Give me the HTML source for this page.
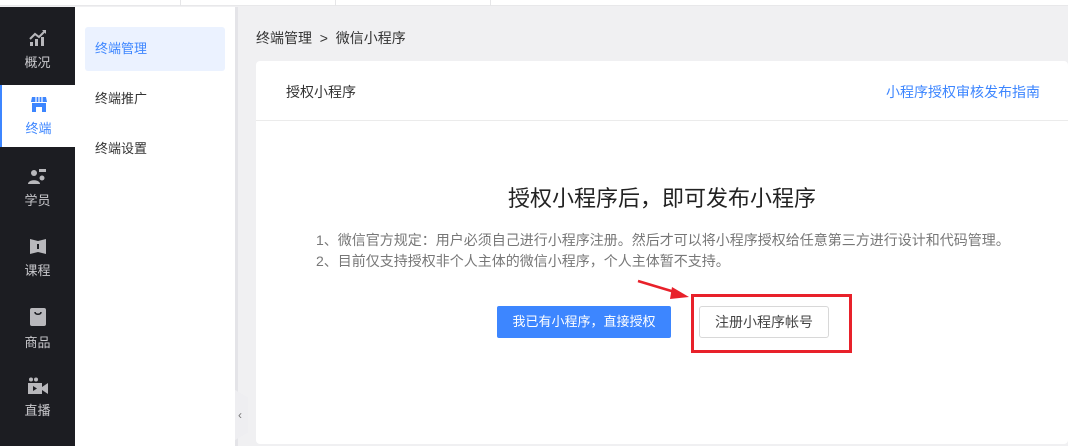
<!DOCTYPE html>
<html><head><meta charset="utf-8"><style>
*{margin:0;padding:0;box-sizing:border-box}
body{width:1068px;height:446px;overflow:hidden;background:#f0f0f2;font-family:"Liberation Sans","Noto Sans CJK SC",sans-serif;position:relative}
.top{position:absolute;left:0;top:0;width:1068px;height:6px;background:#fff;border-bottom:1px solid #e8e8ea}
.top i{position:absolute;top:0;height:6px;width:1px;background:#e6e6e8}
.side{position:absolute;left:0;top:7px;width:75px;height:439px;background:#1c1d22}
.item{position:absolute;left:0;width:75px;height:62px;text-align:center;color:#c8c8cc;font-size:13px;padding-top:5px}
.item svg{display:block;margin:0 auto 5px}
.active{background:#fff;color:#3d86ff;border-left:2px solid #3d86ff}
.sub{position:absolute;left:75px;top:7px;width:160px;height:439px;background:#fff}
.sub div{position:absolute;left:10px;width:140px;height:44px;line-height:44px;padding-left:10px;font-size:13px;color:#333}
.sub .on{background:#ebf2ff;color:#3d86ff;border-radius:3px}
.bar{position:absolute;left:235px;top:7px;width:3px;height:439px;background:#e4e4e8}
.handle{position:absolute;left:235px;top:390px;width:13px;height:50px;background:#eeeef1;clip-path:polygon(0 0,100% 15%,100% 85%,0 100%);color:#777;font-size:12px;line-height:50px;padding-left:3px}
.crumb{position:absolute;left:256px;top:28px;font-size:14px;color:#333}
.card{position:absolute;left:256px;top:61px;width:812px;height:383px;background:#fff;border-radius:4px}
.hd{height:60px;border-bottom:1px solid #ebebeb;position:relative}
.hd .t{position:absolute;left:30px;top:21px;font-size:14px;color:#333}
.hd .l{position:absolute;right:28px;top:21px;font-size:14px;color:#3d86ff}
h1{position:absolute;left:0;width:812px;top:120px;text-align:center;font-size:22px;font-weight:normal;color:#222}
.p{position:absolute;left:60px;top:169px;font-size:14px;color:#777;line-height:21px;white-space:nowrap}
.b1{position:absolute;left:241px;top:245px;width:174px;height:32px;background:#3d86ff;color:#fff;font-size:13px;text-align:center;line-height:32px;border-radius:2px}
.b2{position:absolute;left:443px;top:245px;width:130px;height:32px;border:1px solid #d8d8d8;color:#444;font-size:14px;text-align:center;line-height:30px;border-radius:3px}
.red{position:absolute;left:691px;top:294px;width:161px;height:59px;border:3px solid #e8212a}
</style></head><body>
<div class="top"><i style="left:180px"></i><i style="left:335px"></i><i style="left:490px"></i></div>
<div class="side">
 <div class="item" style="top:17px"><svg width="18" height="18" viewBox="0 0 18 18"><path d="M1 10l5-5 4 3 6-6" stroke="#b8b8bc" stroke-width="2" fill="none"/><path d="M13 1h4v4z" fill="#b8b8bc"/><rect x="1" y="13" width="3" height="4" fill="#b8b8bc"/><rect x="6" y="10" width="3" height="7" fill="#b8b8bc"/><rect x="12" y="8" width="3" height="9" fill="#b8b8bc"/></svg>概况</div>
 <div class="item active" style="top:78px;height:62px;padding-top:10px"><svg width="18" height="18" viewBox="0 0 18 18"><path d="M2 2h14l1 5H1z" fill="#3d86ff"/><path d="M2 8h14v9h-4v-5H6v5H2z" fill="#3d86ff"/><path d="M6 2v5M9 2v5M12 2v5" stroke="#fff" stroke-width="1.2"/></svg>终端</div>
 <div class="item" style="top:155px"><svg width="22" height="18" viewBox="0 0 22 18"><circle cx="7" cy="6" r="3" fill="#b8b8bc"/><path d="M1 17c0-5 12-5 12 0z" fill="#b8b8bc"/><circle cx="15" cy="11" r="2.5" fill="#b8b8bc"/><path d="M12 2h7v3h-7z" fill="#b8b8bc"/></svg>学员</div>
 <div class="item" style="top:225px"><svg width="18" height="18" viewBox="0 0 18 18"><path d="M1 2l8 2 8-2v15l-8-2-8 2z" fill="#b8b8bc"/><rect x="8" y="7" width="2" height="5" fill="#1c1d22"/></svg>课程</div>
 <div class="item" style="top:295px"><svg width="18" height="20" viewBox="0 0 18 20"><rect x="1" y="1" width="16" height="18" rx="2" fill="#b8b8bc"/><path d="M6 5c0 3 6 3 6 0" stroke="#1c1d22" stroke-width="1.6" fill="none"/></svg>商品</div>
 <div class="item" style="top:365px"><svg width="22" height="18" viewBox="0 0 22 18"><circle cx="4" cy="2.5" r="2" fill="#b8b8bc"/><circle cx="9" cy="2.5" r="2" fill="#b8b8bc"/><rect x="1" y="6" width="14" height="11" fill="#b8b8bc"/><path d="M15 10l6-4v11l-6-4z" fill="#b8b8bc"/><path d="M6 9l4 2.5-4 2.5z" fill="#1c1d22"/></svg>直播</div>
</div>
<div class="sub"><div class="on" style="top:20px">终端管理</div><div style="top:70px">终端推广</div><div style="top:120px">终端设置</div></div>
<div class="bar"></div>
<div class="handle">‹</div>
<div class="crumb">终端管理 &nbsp;&gt;&nbsp; 微信小程序</div>
<div class="card">
 <div class="hd"><span class="t">授权小程序</span><span class="l">小程序授权审核发布指南</span></div>
 <h1>授权小程序后，即可发布小程序</h1>
 <div class="p">1、微信官方规定：用户必须自己进行小程序注册。然后才可以将小程序授权给任意第三方进行设计和代码管理。<br>2、目前仅支持授权非个人主体的微信小程序，个人主体暂不支持。</div>
 <div class="b1">我已有小程序，直接授权</div>
 <div class="b2">注册小程序帐号</div>
</div>
<div class="red"></div>
<svg style="position:absolute;left:636px;top:278px" width="56" height="24" viewBox="0 0 56 24"><path d="M2 3L42 15" stroke="#e8212a" stroke-width="2.5"/><path d="M36 9l17 10-19 2z" fill="#e8212a"/></svg>
</body></html>
